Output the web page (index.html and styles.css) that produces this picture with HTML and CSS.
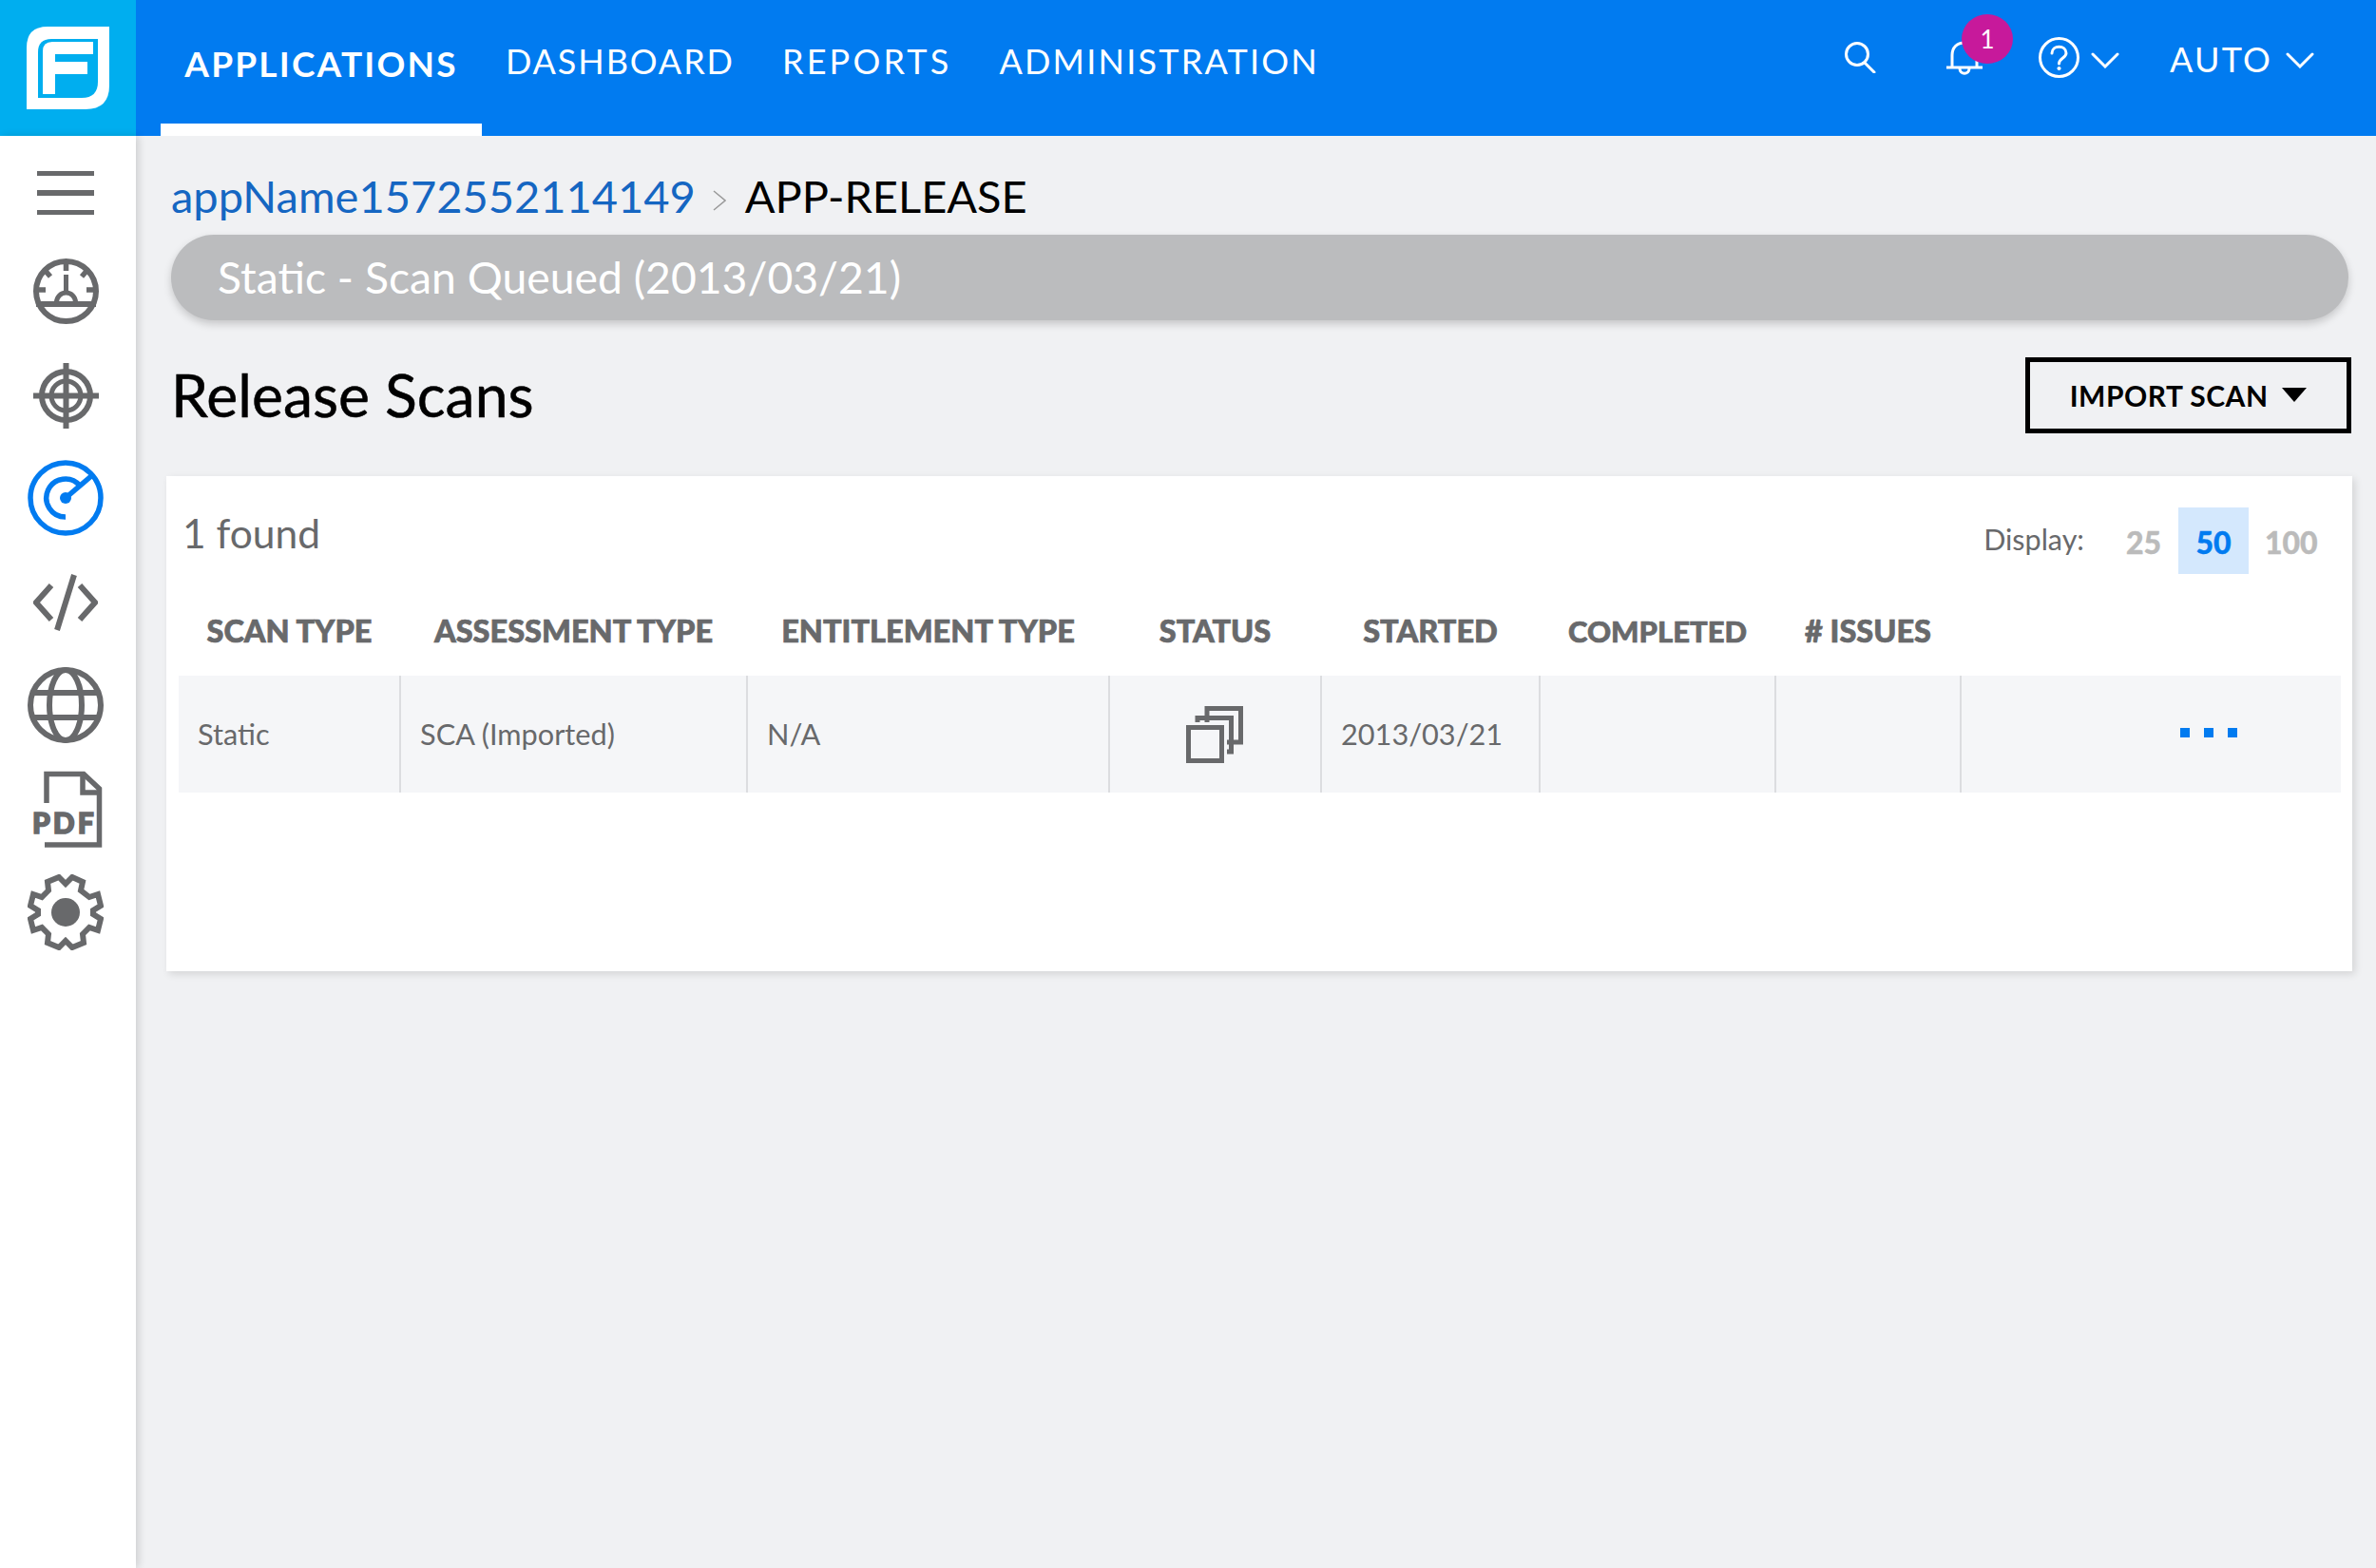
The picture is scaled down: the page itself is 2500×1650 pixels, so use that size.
FILE: index.html
```html
<!DOCTYPE html>
<html lang="en">
<head>
    <meta charset="UTF-8">
    <title>Release Scans</title>
    <link rel="stylesheet" href="styles.css">
</head>
<body>
    <header class="topbar">
        <div class="logo-box">
            <svg class="logo" viewBox="0 0 87 87">
                <path fill="#fff" d="M22 0H87V62Q87 87 62 87H0V22Q0 0 22 0Z"/>
                <path fill="#00aeef" d="M26 13H75V58Q75 75 58 75H12V27Q12 13 26 13Z"/>
                <path fill="#fff" d="M27 16H70V29H30V37H64V50H30V71H17V26Q17 16 27 16Z"/>
            </svg>
        </div>
        <nav class="main-nav">
            <a class="nav-link active" href="#">APPLICATIONS</a>
            <a class="nav-link nav-dashboard" href="#">DASHBOARD</a>
            <a class="nav-link nav-reports" href="#">REPORTS</a>
            <a class="nav-link" href="#">ADMINISTRATION</a>
        </nav>
        <div class="top-tools">
            <svg class="tool-search" viewBox="0 0 33 33" fill="none" stroke="#fff" stroke-width="3" stroke-linecap="round">
                <circle cx="13" cy="13" r="11.5"/>
                <path d="M21 22L31 32"/>
            </svg>
            <div class="bell-wrap">
                <svg class="tool-bell" viewBox="0 0 38 38" fill="none" stroke="#fff" stroke-width="3">
                    <path d="M6 28V16C6 8 11 3 19 3S32 8 32 16V28"/>
                    <path d="M0 29H38"/>
                    <path d="M14 30C14 37 24 37 24 30"/>
                </svg>
                <span class="badge">1</span>
            </div>
            <svg class="tool-help" viewBox="0 0 43 43" fill="none" stroke="#fff" stroke-width="3">
                <circle cx="21.5" cy="21.5" r="20"/>
                <path d="M14 17C14 8 29 8 29 17C29 22 21.5 22 21.5 28" stroke-linecap="round"/>
                <circle cx="21.5" cy="33" r="1.6" fill="#fff" stroke-width="1"/>
            </svg>
            <svg class="chevron help-chevron" viewBox="0 0 30 17" fill="none" stroke="#fff" stroke-width="3" stroke-linecap="round">
                <path d="M2 2L15 15L28 2"/>
            </svg>
            <span class="user-name">AUTO</span>
            <svg class="chevron" viewBox="0 0 30 17" fill="none" stroke="#fff" stroke-width="3" stroke-linecap="round">
                <path d="M2 2L15 15L28 2"/>
            </svg>
        </div>
    </header>

    <div class="layout">
        <aside class="sidebar">
            <div class="hamburger"><span></span><span></span><span></span></div>

            <!-- gauge -->
            <svg class="side-icon gauge-icon" viewBox="0 0 69 69" fill="none" stroke="#68696b" stroke-width="6">
                <circle cx="34.5" cy="34.5" r="31.5"/>
                <path d="M3 48H66"/>
                <path d="M34.500 1V13M1 33H13M56 33H68M11 11L18 19M58 11L51 19" stroke-width="5.5"/>
                <path d="M34.500 17V36" stroke-width="5"/>
                <path d="M24.500 46A10 10 0 0 1 44.500 46" stroke-width="5"/>
            </svg>
            <!-- target -->
            <svg class="side-icon target-icon" viewBox="0 0 69 69" fill="none" stroke="#68696b" stroke-width="6">
                <circle cx="34.5" cy="34.5" r="25.5"/>
                <circle cx="34.5" cy="34.5" r="15.5" stroke-width="5"/>
                <path d="M34.500 0V69M0 34.500H69"/>
            </svg>
            <!-- scans, active -->
            <svg class="side-icon scan-icon" viewBox="0 0 80 80" fill="none" stroke="#017bf0" stroke-width="5.5">
                <circle cx="40" cy="40" r="37"/>
                <path d="M40 60A20 20 0 1 1 55 27"/>
                <path d="M40 40L67 17"/>
                <circle cx="40" cy="40" r="6" fill="#017bf0" stroke="none"/>
            </svg>
            <!-- code -->
            <svg class="side-icon code-icon" viewBox="0 0 68 60" fill="none" stroke="#68696b" stroke-width="6">
                <path d="M19 12L3 30L19 48M49 12L65 30L49 48M43 1L25 59"/>
            </svg>
            <!-- globe -->
            <svg class="side-icon globe-icon" viewBox="0 0 80 80" fill="none" stroke="#68696b" stroke-width="6">
                <circle cx="40" cy="40" r="37"/>
                <ellipse cx="40" cy="40" rx="17" ry="37"/>
                <path d="M6 27H74M6 53H74"/>
            </svg>
            <!-- pdf: the letters are live text over the page outline -->
            <div class="pdf-icon">
                <svg class="pdf-page" viewBox="0 0 75 81" fill="none" stroke="#68696b" stroke-width="5.5">
                    <path d="M15 34V3.500H54L70.500 19V78H13"/>
                    <path d="M53 3.500V23H70.500"/>
                </svg>
                <span class="pdf-label">PDF</span>
            </div>
            <!-- gear -->
            <svg class="side-icon gear-icon" viewBox="0 0 80 80">
                <path fill="none" stroke="#68696b" stroke-width="6" stroke-linejoin="miter" d="M33 3L40 10L47 3L58 8L56 17L65 24L74 21L77 33L69 38V42L77 47L74 59L65 56L58 63L59 72L47 77L40 70L33 77L21 72L22 63L15 56L6 59L3 47L11 42V38L3 33L6 21L15 24L22 17L21 8Z"/>
                <circle cx="40" cy="40" r="15" fill="#68696b"/>
            </svg>
        </aside>

        <main class="content">
            <div class="breadcrumb">
                <a class="crumb-link" href="#">appName1572552114149</a>
                <svg class="crumb-sep" viewBox="0 0 14 22" fill="none" stroke="#999" stroke-width="1.500"><path d="M1 1L13 11L1 21"/></svg>
                <span class="crumb-current">APP-RELEASE</span>
            </div>

            <div class="status-pill">Static - Scan Queued (2013/03/21)</div>

            <div class="title-row">
                <h1 class="page-title">Release Scans</h1>
                <button class="import-btn">IMPORT SCAN <span class="caret"></span></button>
            </div>

            <section class="panel">
                <div class="panel-head">
                    <span class="found">1 found</span>
                    <div class="display-opts">
                        <span class="display-label">Display:</span>
                        <span class="page-size size-25">25</span>
                        <span class="page-size selected">50</span>
                        <span class="page-size size-100">100</span>
                    </div>
                </div>

                <table class="scans">
                    <colgroup>
                        <col class="c1"><col class="c2"><col class="c3"><col class="c4">
                        <col class="c5"><col class="c6"><col class="c7"><col>
                    </colgroup>
                    <thead>
                        <tr>
                            <th>Scan Type</th>
                            <th>Assessment Type</th>
                            <th>Entitlement Type</th>
                            <th>Status</th>
                            <th>Started</th>
                            <th class="th-completed">Completed</th>
                            <th># Issues</th>
                            <th></th>
                        </tr>
                    </thead>
                    <tbody>
                        <tr>
                            <td>Static</td>
                            <td>SCA (Imported)</td>
                            <td>N/A</td>
                            <td class="status-cell">
                                <svg class="queued-icon" viewBox="0 0 60 60" fill="none" stroke="#68696b" stroke-width="5">
                                    <path d="M22 17V2.500H57.500V38H43"/>
                                    <path d="M12 17V12.500H47.500V48H43"/>
                                    <rect x="2.500" y="22.500" width="35" height="35"/>
                                </svg>
                            </td>
                            <td>2013/03/21</td>
                            <td></td>
                            <td></td>
                            <td class="actions-cell"><span class="dots"><i></i><i></i><i></i></span></td>
                        </tr>
                    </tbody>
                </table>
            </section>
        </main>
    </div>
</body>
</html>
```

FILE: styles.css
```css
* {
    box-sizing: border-box;
}
html, body {
    height: 100%;
}
body {
    margin: 0;
    font-family: Lato, "Open Sans", sans-serif;
    background: #f0f1f3;
    color: #000;
    overflow: hidden;
}

/* top bar */
.topbar {
    display: flex;
    height: 143px;
    background: #017bf0;
    color: #fff;
}
.logo-box {
    width: 143px;
    flex: none;
    display: flex;
    align-items: center;
    justify-content: center;
    background: #00aeef;
}
.logo {
    width: 87px;
    height: 87px;
}
.main-nav {
    display: flex;
    margin-left: 26px;
}
.nav-link {
    height: 143px;
    padding: 45px 25px 0;
    color: #fff;
    font-size: 36px;
    line-height: 38px;
    letter-spacing: 2.2px;
    text-decoration: none;
    white-space: nowrap;
}
.nav-link.active {
    width: 338px;
    padding: 48px 0 0;
    font-size: 37px;
    font-weight: 700;
    text-align: center;
    border-bottom: 13px solid #fff;
}
.nav-dashboard {
    letter-spacing: 1.9px;
}
.nav-reports {
    letter-spacing: 3.2px;
}
.top-tools {
    display: flex;
    align-items: center;
    margin-left: auto;
    padding: 0 65px 22px 0;
}
.tool-search {
    width: 33px;
    height: 33px;
}
.bell-wrap {
    position: relative;
    width: 38px;
    height: 38px;
    margin-left: 74px;
}
.tool-bell {
    width: 38px;
    height: 38px;
}
.badge {
    position: absolute;
    left: 16px;
    top: -27px;
    width: 54px;
    height: 52px;
    border-radius: 50%;
    background: #c7199b;
    color: #fff;
    font-size: 26px;
    line-height: 52px;
    text-align: center;
}
.tool-help {
    width: 43px;
    height: 43px;
    margin-left: 59px;
}
.chevron {
    width: 30px;
    height: 17px;
    margin-top: 6px;
}
.help-chevron {
    margin-left: 12px;
}
.user-name {
    margin-left: 53px;
    margin-right: 14px;
    padding-top: 2px;
    font-size: 36px;
    letter-spacing: 2.2px;
}

/* left icon column */
.layout {
    display: flex;
    height: 1507px;
}
.sidebar {
    width: 143px;
    flex: none;
    display: flex;
    flex-direction: column;
    align-items: center;
    padding: 37px 5px 0 0;
    background: #fff;
    box-shadow: 3px 0 8px rgba(0,0,0,0.14);
}
.hamburger {
    display: flex;
    flex-direction: column;
    gap: 15px;
    width: 60px;
    height: 46px;
    margin: 0 0 46px;
}
.hamburger span {
    height: 5.500px;
    background: #68696b;
}
.side-icon {
    flex: none;
}
.gauge-icon {
    width: 69px;
    height: 69px;
    margin-bottom: 41px;
}
.target-icon {
    width: 69px;
    height: 69px;
    margin-bottom: 33px;
}
.scan-icon {
    width: 80px;
    height: 80px;
    margin-bottom: 40px;
}
.code-icon {
    width: 68px;
    height: 60px;
    margin-bottom: 38px;
}
.globe-icon {
    width: 80px;
    height: 80px;
    margin-bottom: 29px;
}
.pdf-icon {
    position: relative;
    width: 75px;
    height: 81px;
    margin: 0 0 28px 5px;
    flex: none;
}
.gear-icon {
    width: 80px;
    height: 80px;
}
.pdf-page {
    width: 75px;
    height: 81px;
    display: block;
}
.pdf-label {
    position: absolute;
    left: 0;
    top: 39px;
    color: #68696b;
    font-size: 30px;
    line-height: 30px;
    font-weight: 900;
    letter-spacing: 3px;
    -webkit-text-stroke: 1.6px #68696b;
}

/* main column */
.content {
    flex: 1;
    padding: 0 25px 0 32px;
}
.breadcrumb {
    display: flex;
    align-items: center;
    height: 70px;
    margin: 28px 0 6px 5px;
    font-size: 47px;
}
.crumb-link {
    color: #1566c2;
    text-decoration: none;
}
.crumb-sep {
    width: 14px;
    height: 22px;
    margin: 10px 20px 0 18px;
}
.status-pill {
    height: 90px;
    margin: 0 4px 0 5px;
    padding-left: 49px;
    border-radius: 45px;
    background: #bbbcbe;
    box-shadow: 0 4px 8px rgba(0,0,0,0.18);
    color: #fff;
    font-size: 46.300px;
    line-height: 88px;
}
.title-row {
    display: flex;
    align-items: center;
    justify-content: space-between;
    height: 80px;
    margin: 39px 1px 45px 5px;
}
.page-title {
    margin: 0 0 4px;
    font-size: 62.500px;
    font-weight: 400;
    -webkit-text-stroke: 0.5px #000;
}
.import-btn {
    width: 343px;
    height: 80px;
    padding-right: 6px;
    border: 5px solid #000;
    background: transparent;
    color: #000;
    font-family: inherit;
    font-size: 30px;
    font-weight: 700;
    letter-spacing: 0.5px;
    cursor: pointer;
}
.caret {
    display: inline-block;
    width: 0;
    height: 0;
    margin: 0 0 5px 7px;
    border-left: 13px solid transparent;
    border-right: 13px solid transparent;
    border-top: 15px solid #000;
}

/* results panel */
.panel {
    height: 521px;
    padding: 0 12px 0 13px;
    background: #fff;
    box-shadow: 3px 3px 8px rgba(0,0,0,0.12);
}
.panel-head {
    display: flex;
    justify-content: space-between;
    align-items: flex-start;
    height: 127px;
    padding: 33px 23px 0 4px;
}
.found {
    padding-top: 1px;
    color: #68696b;
    font-size: 42.500px;
    line-height: 52px;
}
.display-opts {
    display: flex;
    align-items: center;
    color: #68696b;
}
.display-label {
    margin: 0 0 5px;
    font-size: 30.500px;
}
.page-size {
    height: 70px;
    line-height: 74px;
    text-align: center;
    font-size: 32px;
    font-weight: 900;
    color: #bbb;
    -webkit-text-stroke: 0.4px currentColor;
}
.size-25 {
    width: 99px;
    padding-right: 18px;
    text-align: right;
}
.size-100 {
    width: 74px;
    padding-left: 17px;
    text-align: left;
}
.page-size.selected {
    width: 74px;
    background: #d4e8fd;
    color: #017bf0;
}
.scans {
    width: 2275px;
    table-layout: fixed;
    border-collapse: collapse;
}
.c1 { width: 233px; }
.c2 { width: 365px; }
.c3 { width: 381px; }
.c4 { width: 223px; }
.c5 { width: 230px; }
.c6 { width: 248px; }
.c7 { width: 195px; }
.scans th {
    height: 83px;
    padding: 0 0 12px;
    color: #68696b;
    font-size: 32.500px;
    font-weight: 900;
    text-transform: uppercase;
    white-space: nowrap;
    -webkit-text-stroke: 0.7px #68696b;
}
.scans .th-completed {
    font-size: 31px;
}
.scans td {
    height: 123px;
    padding: 0 0 0 20px;
    background: #f5f6f8;
    border-left: 2px solid #dcdde0;
    color: #68696b;
    font-size: 30.700px;
}
.scans td:first-child {
    border-left: none;
}
.status-cell {
    text-align: center;
}
.queued-icon {
    display: block;
    width: 60px;
    height: 60px;
    margin: 0 0 0 60px;
}
.actions-cell {
    text-align: left;
}
.dots {
    display: flex;
    gap: 15px;
    margin: 0 0 3px 210px;
}
.dots i {
    width: 10px;
    height: 10px;
    background: #017bf0;
}
```
